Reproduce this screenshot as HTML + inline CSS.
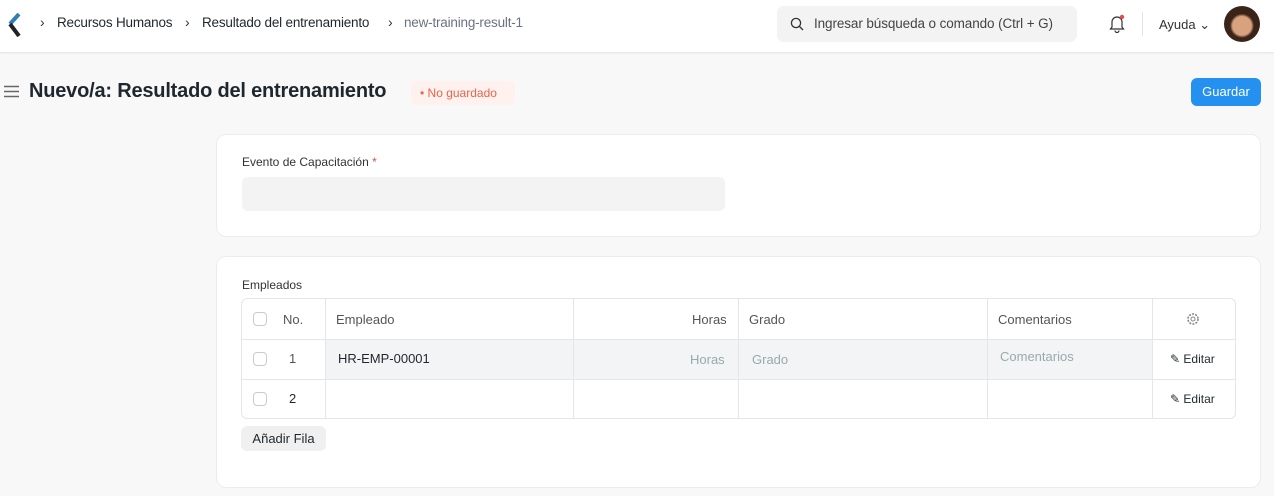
<!DOCTYPE html>
<html><head><meta charset="utf-8"><style>
*{box-sizing:border-box;margin:0;padding:0}
body{width:1274px;height:496px;overflow:hidden;background:#f8f8f8;font-family:"Liberation Sans",sans-serif;color:#1f272e;position:relative}
.nav{position:absolute;left:0;top:0;width:1274px;height:53px;background:#fff;border-bottom:1px solid #e8e8e8;box-shadow:0 1px 2px rgba(0,0,0,.04)}
.abs{position:absolute}
.bc{font-size:13.5px;color:#1f272e;top:15px;letter-spacing:-0.2px}
.chev{font-size:14px;color:#333;top:14px}
.search{left:777px;top:6px;width:300px;height:36px;background:#f3f3f3;border-radius:7px}
.card{position:absolute;left:216px;width:1045px;background:#fff;border:1px solid #ececec;border-radius:10px}
.tbl{position:absolute;left:241px;top:298px;width:995px;height:121px;border:1px solid #e6e6e6;border-radius:6px;overflow:hidden}
.cell{position:absolute;font-size:13px}
.vl{position:absolute;top:0;height:121px;width:1px;background:#e6e6e6}
.hl{position:absolute;left:0;width:995px;height:1px;background:#e6e6e6}
.cb{position:absolute;left:11px;width:14px;height:14px;border:1px solid #c8ccd0;border-radius:4px;background:#fff}
</style></head><body>
<div class="nav">
 <svg class="abs" style="left:7px;top:13px" width="14" height="24" viewBox="0 0 14 24"><path d="M12 1 L3 11" stroke="#2e7fb8" stroke-width="4" fill="none"/><path d="M3 11 L12 23" stroke="#222" stroke-width="4" fill="none"/></svg>
 <span class="abs chev" style="left:40px">›</span>
 <span class="abs bc" style="left:57px">Recursos Humanos</span>
 <span class="abs chev" style="left:185px">›</span>
 <span class="abs bc" style="left:202px">Resultado del entrenamiento</span>
 <span class="abs chev" style="left:388px">›</span>
 <span class="abs bc" style="left:404px;color:#6b7280">new-training-result-1</span>
 <div class="abs search">
  <svg class="abs" style="left:13px;top:11px" width="14" height="14" viewBox="0 0 14 14"><circle cx="6" cy="6" r="4.6" stroke="#333" stroke-width="1.3" fill="none"/><path d="M9.5 9.5 L13 13" stroke="#333" stroke-width="1.3"/></svg>
  <span class="abs" style="left:37px;top:10px;font-size:13.5px;color:#444;letter-spacing:-0.1px">Ingresar búsqueda o comando (Ctrl + G)</span>
 </div>
 <svg class="abs" style="left:1108px;top:13px" width="18" height="20" viewBox="0 0 18 20"><path d="M4 14 V9 a5 5 0 0 1 10 0 V14 L15.5 16 H2.5 Z" stroke="#333" stroke-width="1.2" fill="none"/><path d="M7 17.5 a2 2 0 0 0 4 0" stroke="#333" stroke-width="1.2" fill="none"/><circle cx="14" cy="4" r="2.2" fill="#e24c4c"/></svg>
 <div class="abs" style="left:1142px;top:12px;width:1px;height:24px;background:#e2e2e2"></div>
 <span class="abs" style="left:1159px;top:17px;font-size:13px;color:#333">Ayuda ⌄</span>
 <div class="abs" style="left:1224px;top:6px;width:36px;height:36px;border-radius:50%;background:radial-gradient(circle at 50% 55%,#d9a27f 0 35%,#3a2418 45%)"></div>
</div>
<svg class="abs" style="left:4px;top:85px" width="15" height="13" viewBox="0 0 15 13"><path d="M0 1.5H15M0 6.5H15M0 11.5H15" stroke="#666" stroke-width="1.4"/></svg>
<div class="abs" style="left:29px;top:80px;font-size:20px;font-weight:bold;color:#1f272e;letter-spacing:-0.2px">Nuevo/a: Resultado del entrenamiento</div>
<div class="abs" style="left:411px;top:81px;width:104px;height:24px;background:#fff1ee;border-radius:6px;font-size:12px;color:#e8644a;padding:5px 0 0 9px">• No guardado</div>
<div class="abs" style="left:1191px;top:78px;width:70px;height:28px;background:#2490ef;border-radius:6px;color:#fff;font-size:13px;text-align:center;line-height:28px">Guardar</div>

<div class="card" style="top:134px;height:103px">
 <div class="abs" style="left:25px;top:20px;font-size:12px;color:#333">Evento de Capacitación <span style="color:#e24c4c">*</span></div>
 <div class="abs" style="left:25px;top:42px;width:483px;height:34px;background:#f3f3f3;border-radius:6px"></div>
</div>
<div class="card" style="top:256px;height:232px">
 <div class="abs" style="left:25px;top:21px;font-size:12px;color:#333">Empleados</div>
</div>
<div class="tbl">
 <div class="abs" style="left:83px;top:40px;width:827px;height:40px;background:#f3f4f6"></div>
 <div class="hl" style="top:40px"></div><div class="hl" style="top:80px"></div>
 <div class="vl" style="left:83px"></div><div class="vl" style="left:331px"></div><div class="vl" style="left:496px"></div><div class="vl" style="left:745px"></div><div class="vl" style="left:910px"></div>
 <div class="cb" style="top:13px"></div><div class="cb" style="top:53px"></div><div class="cb" style="top:93px"></div>
 <span class="cell" style="left:41px;top:13px;color:#555">No.</span>
 <span class="cell" style="left:94px;top:13px;color:#555">Empleado</span>
 <span class="cell" style="left:450px;top:13px;color:#555">Horas</span>
 <span class="cell" style="left:507px;top:13px;color:#555">Grado</span>
 <span class="cell" style="left:756px;top:13px;color:#555">Comentarios</span>
 <svg class="abs" style="left:944px;top:13px" width="14" height="14" viewBox="0 0 14 14"><circle cx="7" cy="7" r="2" stroke="#888" fill="none"/><circle cx="7" cy="7" r="5" stroke="#888" stroke-dasharray="2 1.2" stroke-width="1.6" fill="none"/></svg>
 <span class="cell" style="left:47px;top:52px;color:#555">1</span>
 <span class="cell" style="left:96px;top:52px">HR-EMP-00001</span>
 <span class="cell" style="left:448px;top:53px;color:#9aa">Horas</span>
 <span class="cell" style="left:510px;top:53px;color:#9aa">Grado</span>
 <span class="cell" style="left:758px;top:50px;color:#9aa">Comentarios</span>
 <span class="cell" style="left:928px;top:53px;font-size:12px">✎ Editar</span>
 <span class="cell" style="left:47px;top:92px">2</span>
 <span class="cell" style="left:928px;top:93px;font-size:12px">✎ Editar</span>
</div>
<div class="abs" style="left:241px;top:426px;width:85px;height:25px;background:#f0f0f0;border-radius:6px;font-size:13px;text-align:center;line-height:25px">Añadir Fila</div>
</body></html>
